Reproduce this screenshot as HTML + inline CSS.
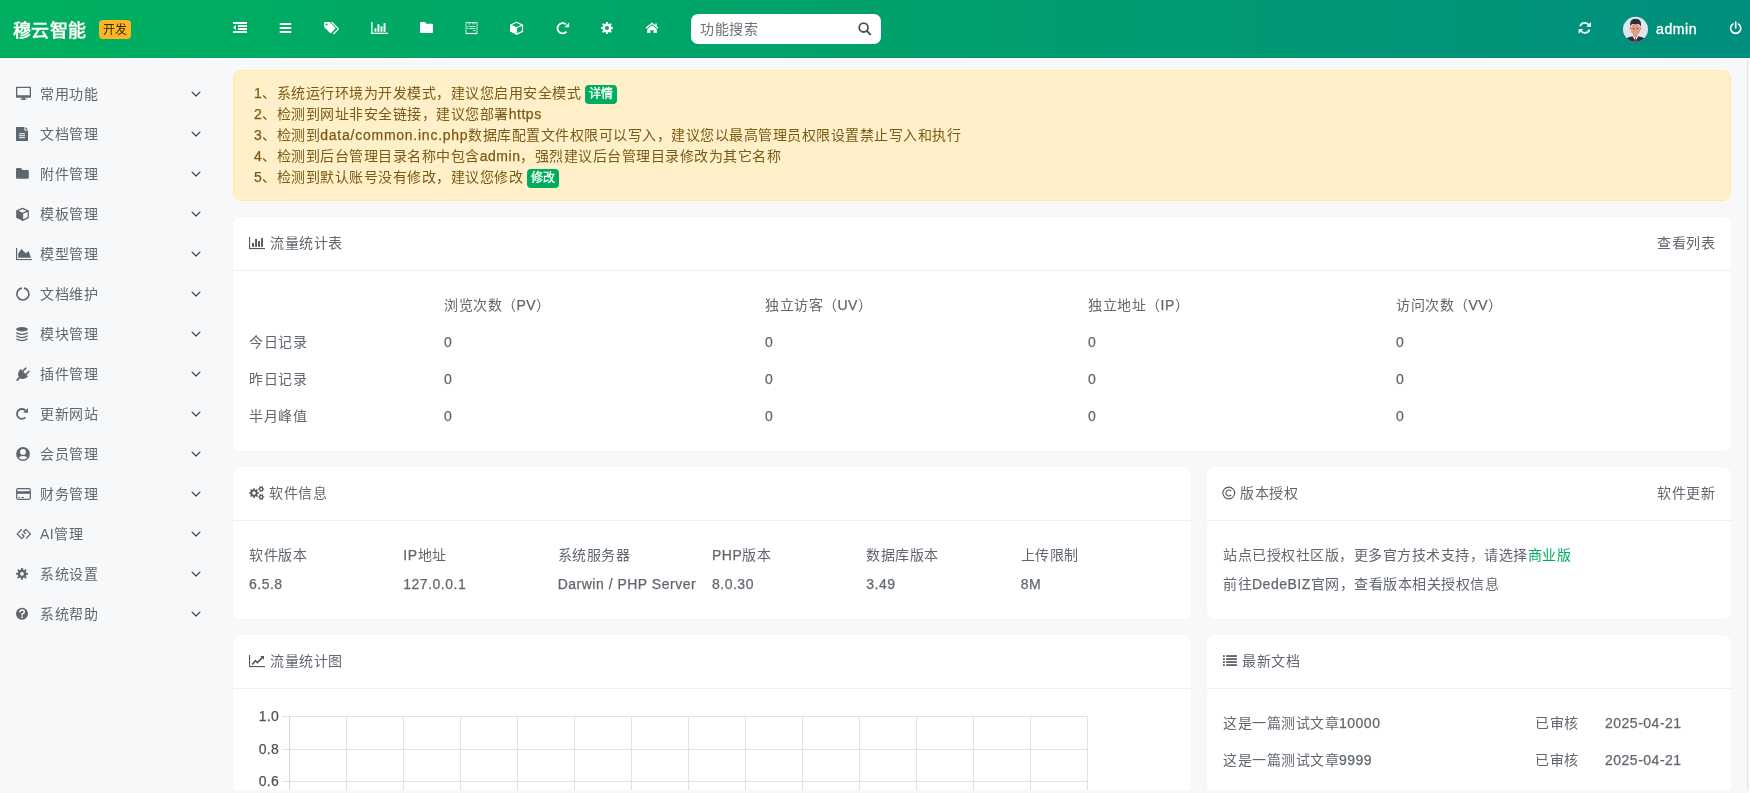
<!DOCTYPE html>
<html lang="zh-CN"><head><meta charset="utf-8"><style>
*{box-sizing:border-box;margin:0;padding:0}
html,body{width:1750px;height:793px;overflow:hidden}
body{letter-spacing:0.5px;text-spacing-trim:space-all;background:#f7f8fa;font-family:"Liberation Sans",sans-serif;font-size:14px;color:#5a6168;position:relative}
.abs{position:absolute}
.hdr{left:0;top:0;width:1750px;height:58px;background:linear-gradient(to right,#00af5f 0%,#00a667 35%,#008f7e 100%)}
.hdrb{left:0;top:57px;width:1750px;height:1px;background:rgba(0,0,0,.05)}
.hline{left:0;top:58px;width:1750px;height:1px;background:#fff}
.logo{left:13px;top:18.5px;font-size:18px;font-weight:bold;color:#fff;line-height:24px;letter-spacing:0.3px}
.badge-dev{left:99px;top:20px;width:32px;height:19px;background:#fbb625;border-radius:4px;color:#3a2a00;font-size:12px;line-height:21px;text-align:center;letter-spacing:0.2px}
.search{left:691px;top:14px;width:190px;height:30px;background:#fff;border-radius:7px}
.search .ph{position:absolute;left:9px;top:7px;line-height:16px;color:#6b7178}
.admin{left:1656px;top:18.5px;color:#fff;font-size:14px;line-height:20px;letter-spacing:0.6px;-webkit-text-stroke:0.35px #fff}
.si{position:absolute;left:0;width:225px;height:40px}
.si .ic{position:absolute;left:16px;top:13px;width:15px;height:14px}
.si .tx{position:absolute;left:40px;top:13px;line-height:16px;color:#60676e}
.si .chev{position:absolute;left:191px;top:18px}
.alert{left:233px;top:70px;width:1498px;height:131px;background:#fff0c9;border:1px solid #ffe8ab;border-radius:8px;color:#7b5a16}
.alert .ln{position:absolute;left:20px;line-height:16px;white-space:nowrap}
.bdg{display:inline-block;background:#00ad5f;color:#fff;font-size:12px;height:19px;line-height:19px;padding:0 3.5px 0 3.5px;border-radius:4px;vertical-align:top;margin-top:0;margin-left:-0.5px;letter-spacing:0.2px;-webkit-text-stroke:0.3px #fff}
.card{position:absolute;background:#fff;border-radius:7px;overflow:hidden;box-shadow:0 0 2px rgba(0,0,0,.035)}
.card .ch{position:absolute;left:0;top:0;width:100%;height:54px;border-bottom:1px solid #eeeff1}
.card .tt{position:absolute;left:16px;top:18px;line-height:16px;color:#60676e;white-space:nowrap}
.card .rt{position:absolute;right:16px;top:18px;line-height:16px;color:#60676e}
.t{position:absolute;line-height:16px;white-space:nowrap;color:#60676e}
.lat{}
.L{-webkit-text-stroke:0.25px currentColor}
</style></head><body>
<div id="root" style="position:absolute;left:0;top:0;width:1750px;height:793px;will-change:transform">
<div class="abs hdr"></div><div class="abs hdrb"></div><div class="abs hline"></div>
<div class="abs logo">穆云智能</div><div class="abs badge-dev">开发</div>
<div class="abs search"><span class="ph">功能搜索</span></div>
<div class="abs admin">admin</div>
<div class="si" style="top:73px"><div class="tx">常用功能</div><svg class="chev" width="10" height="6" viewBox="0 0 10 6"><path d="M1.2 1.3 L5 5 L8.8 1.3" fill="none" stroke="#41484f" stroke-width="1.25" stroke-linecap="round" stroke-linejoin="round"/></svg></div>
<div class="si" style="top:113px"><div class="tx">文档管理</div><svg class="chev" width="10" height="6" viewBox="0 0 10 6"><path d="M1.2 1.3 L5 5 L8.8 1.3" fill="none" stroke="#41484f" stroke-width="1.25" stroke-linecap="round" stroke-linejoin="round"/></svg></div>
<div class="si" style="top:153px"><div class="tx">附件管理</div><svg class="chev" width="10" height="6" viewBox="0 0 10 6"><path d="M1.2 1.3 L5 5 L8.8 1.3" fill="none" stroke="#41484f" stroke-width="1.25" stroke-linecap="round" stroke-linejoin="round"/></svg></div>
<div class="si" style="top:193px"><div class="tx">模板管理</div><svg class="chev" width="10" height="6" viewBox="0 0 10 6"><path d="M1.2 1.3 L5 5 L8.8 1.3" fill="none" stroke="#41484f" stroke-width="1.25" stroke-linecap="round" stroke-linejoin="round"/></svg></div>
<div class="si" style="top:233px"><div class="tx">模型管理</div><svg class="chev" width="10" height="6" viewBox="0 0 10 6"><path d="M1.2 1.3 L5 5 L8.8 1.3" fill="none" stroke="#41484f" stroke-width="1.25" stroke-linecap="round" stroke-linejoin="round"/></svg></div>
<div class="si" style="top:273px"><div class="tx">文档维护</div><svg class="chev" width="10" height="6" viewBox="0 0 10 6"><path d="M1.2 1.3 L5 5 L8.8 1.3" fill="none" stroke="#41484f" stroke-width="1.25" stroke-linecap="round" stroke-linejoin="round"/></svg></div>
<div class="si" style="top:313px"><div class="tx">模块管理</div><svg class="chev" width="10" height="6" viewBox="0 0 10 6"><path d="M1.2 1.3 L5 5 L8.8 1.3" fill="none" stroke="#41484f" stroke-width="1.25" stroke-linecap="round" stroke-linejoin="round"/></svg></div>
<div class="si" style="top:353px"><div class="tx">插件管理</div><svg class="chev" width="10" height="6" viewBox="0 0 10 6"><path d="M1.2 1.3 L5 5 L8.8 1.3" fill="none" stroke="#41484f" stroke-width="1.25" stroke-linecap="round" stroke-linejoin="round"/></svg></div>
<div class="si" style="top:393px"><div class="tx">更新网站</div><svg class="chev" width="10" height="6" viewBox="0 0 10 6"><path d="M1.2 1.3 L5 5 L8.8 1.3" fill="none" stroke="#41484f" stroke-width="1.25" stroke-linecap="round" stroke-linejoin="round"/></svg></div>
<div class="si" style="top:433px"><div class="tx">会员管理</div><svg class="chev" width="10" height="6" viewBox="0 0 10 6"><path d="M1.2 1.3 L5 5 L8.8 1.3" fill="none" stroke="#41484f" stroke-width="1.25" stroke-linecap="round" stroke-linejoin="round"/></svg></div>
<div class="si" style="top:473px"><div class="tx">财务管理</div><svg class="chev" width="10" height="6" viewBox="0 0 10 6"><path d="M1.2 1.3 L5 5 L8.8 1.3" fill="none" stroke="#41484f" stroke-width="1.25" stroke-linecap="round" stroke-linejoin="round"/></svg></div>
<div class="si" style="top:513px"><div class="tx">AI管理</div><svg class="chev" width="10" height="6" viewBox="0 0 10 6"><path d="M1.2 1.3 L5 5 L8.8 1.3" fill="none" stroke="#41484f" stroke-width="1.25" stroke-linecap="round" stroke-linejoin="round"/></svg></div>
<div class="si" style="top:553px"><div class="tx">系统设置</div><svg class="chev" width="10" height="6" viewBox="0 0 10 6"><path d="M1.2 1.3 L5 5 L8.8 1.3" fill="none" stroke="#41484f" stroke-width="1.25" stroke-linecap="round" stroke-linejoin="round"/></svg></div>
<div class="si" style="top:593px"><div class="tx">系统帮助</div><svg class="chev" width="10" height="6" viewBox="0 0 10 6"><path d="M1.2 1.3 L5 5 L8.8 1.3" fill="none" stroke="#41484f" stroke-width="1.25" stroke-linecap="round" stroke-linejoin="round"/></svg></div>
<div class="abs alert">
 <div class="ln" style="top:14px"><span class="L">1</span>、系统运行环境为开发模式，建议您启用安全模式 <span class="bdg">详情</span></div>
 <div class="ln" style="top:35px"><span class="L">2</span>、检测到网址非安全链接，建议您部署<span class="L">https</span></div>
 <div class="ln" style="top:56px"><span class="L">3</span>、检测到<span style="letter-spacing:0.75px"><span class="L">data/common.inc.php</span></span>数据库配置文件权限可以写入，建议您以最高管理员权限设置禁止写入和执行</div>
 <div class="ln" style="top:77px"><span class="L">4</span>、检测到后台管理目录名称中包含<span class="L">admin</span>，强烈建议后台管理目录修改为其它名称</div>
 <div class="ln" style="top:98px"><span class="L">5</span>、检测到默认账号没有修改，建议您修改 <span class="bdg">修改</span></div>
</div>
<div class="card" style="left:233px;top:217px;width:1498px;height:234px"><div class="ch"><div class="tt" style="left:37px">流量统计表</div><div class="rt">查看列表</div></div><div class="t" style="left:211px;top:80px">浏览次数（<span class="L">PV</span>）</div><div class="t" style="left:532px;top:80px">独立访客（<span class="L">UV</span>）</div><div class="t" style="left:855px;top:80px">独立地址（<span class="L">IP</span>）</div><div class="t" style="left:1163px;top:80px">访问次数（<span class="L">VV</span>）</div><div class="t" style="left:16px;top:117px">今日记录</div><div class="t" style="left:211px;top:117px"><span class="L">0</span></div><div class="t" style="left:532px;top:117px"><span class="L">0</span></div><div class="t" style="left:855px;top:117px"><span class="L">0</span></div><div class="t" style="left:1163px;top:117px"><span class="L">0</span></div><div class="t" style="left:16px;top:154px">昨日记录</div><div class="t" style="left:211px;top:154px"><span class="L">0</span></div><div class="t" style="left:532px;top:154px"><span class="L">0</span></div><div class="t" style="left:855px;top:154px"><span class="L">0</span></div><div class="t" style="left:1163px;top:154px"><span class="L">0</span></div><div class="t" style="left:16px;top:191px">半月峰值</div><div class="t" style="left:211px;top:191px"><span class="L">0</span></div><div class="t" style="left:532px;top:191px"><span class="L">0</span></div><div class="t" style="left:855px;top:191px"><span class="L">0</span></div><div class="t" style="left:1163px;top:191px"><span class="L">0</span></div></div>
<div class="card" style="left:233px;top:467px;width:958px;height:152px"><div class="ch"><div class="tt" style="left:36px">软件信息</div></div><div class="t" style="left:16.0px;top:80px">软件版本</div><div class="t lat" style="left:16.0px;top:109px"><span class="L">6.5.8</span></div><div class="t" style="left:170.3px;top:80px"><span class="L">IP</span>地址</div><div class="t lat" style="left:170.3px;top:109px"><span class="L">127.0.0.1</span></div><div class="t" style="left:324.7px;top:80px">系统服务器</div><div class="t lat" style="left:324.7px;top:109px"><span class="L">Darwin / PHP Server</span></div><div class="t" style="left:479.0px;top:80px"><span class="L">PHP</span>版本</div><div class="t lat" style="left:479.0px;top:109px"><span class="L">8.0.30</span></div><div class="t" style="left:633.3px;top:80px">数据库版本</div><div class="t lat" style="left:633.3px;top:109px"><span class="L">3.49</span></div><div class="t" style="left:787.7px;top:80px">上传限制</div><div class="t lat" style="left:787.7px;top:109px"><span class="L">8M</span></div></div>
<div class="card" style="left:1207px;top:467px;width:524px;height:152px">
<div class="ch"><div class="tt" style="left:33px">版本授权</div><div class="rt">软件更新</div></div>
<div class="t" style="left:16px;top:80px">站点已授权社区版，更多官方技术支持，请选择<span style="color:#00ad5f">商业版</span></div>
<div class="t" style="left:16px;top:109px">前往<span class="L">DedeBIZ</span>官网，查看版本相关授权信息</div>
</div>
<div class="card" style="left:233px;top:635px;width:958px;height:200px"><div class="ch"><div class="tt" style="left:37px">流量统计图</div></div><div class="t" style="left:0;width:46px;text-align:right;top:73px;color:#4d545b;letter-spacing:0.3px"><span class="L">1.0</span></div><div class="t" style="left:0;width:46px;text-align:right;top:106px;color:#4d545b;letter-spacing:0.3px"><span class="L">0.8</span></div><div class="t" style="left:0;width:46px;text-align:right;top:138px;color:#4d545b;letter-spacing:0.3px"><span class="L">0.6</span></div></div>
<div class="card" style="left:1207px;top:635px;width:524px;height:200px">
<div class="ch"><div class="tt" style="left:35px">最新文档</div></div>
<div class="t" style="left:16px;top:80px">这是一篇测试文章<span class="L">10000</span></div>
<div class="t" style="left:328px;top:80px">已审核</div>
<div class="t lat" style="left:398px;top:80px"><span class="L">2025-04-21</span></div>
<div class="t" style="left:16px;top:117px">这是一篇测试文章<span class="L">9999</span></div>
<div class="t" style="left:328px;top:117px">已审核</div>
<div class="t lat" style="left:398px;top:117px"><span class="L">2025-04-21</span></div>
</div>
<div class="abs" style="left:225px;top:790px;width:1525px;height:3px;background:#f7f8fa"></div>
<div class="abs" style="left:1747px;top:59px;width:1px;height:731px;background:#e3e3e3"></div>
<svg class="abs" style="left:0;top:0" width="1750" height="793" viewBox="0 0 1750 793"><g fill="#fff"><rect x="233" y="22" width="14" height="2"/><rect x="238" y="25" width="9" height="2"/><rect x="238" y="28" width="9" height="2"/><rect x="233" y="31" width="14" height="2"/><path d="M233,27.5 L236,25 L236,30 Z"/></g><g fill="#fff"><rect x="279.5" y="23" width="12" height="2" rx="1"/><rect x="279.5" y="27" width="12" height="2" rx="1"/><rect x="279.5" y="31" width="12" height="2" rx="1"/></g><path fill="#fff" fill-rule="evenodd" d="M324,23 Q324,22 325,22 L329.8,22 L335.2,27.6 Q335.8,28.2 335.2,28.8 L331.2,33 Q330.6,33.6 330,33 L324.6,27.4 Q324,26.8 324,26 Z M326.6,23.4 A1.1,1.1 0 1 0 326.6,25.6 A1.1,1.1 0 1 0 326.6,23.4 Z"/><path fill="none" stroke="#fff" stroke-width="1.2" d="M331.8,22.2 L338,28.4 Q338.5,28.9 338,29.4 L333.4,34"/><g fill="#fff"><rect x="371" y="22" width="1.6" height="12" fill-opacity="0.85"/><rect x="371" y="32.7" width="17" height="1.3"/><rect x="374.5" y="28.3" width="1.9" height="3.5"/><rect x="377.5" y="24.2" width="1.9" height="7.6"/><rect x="380.6" y="26.3" width="1.9" height="5.5"/><rect x="383.6" y="23.2" width="1.9" height="8.6"/></g><path fill="#fff" d="M420,23.2 Q420,22 421.2,22 L425,22 L426.4,23.8 L431.8,23.8 Q433,23.8 433,25 L433,31.8 Q433,33 431.8,33 L421.2,33 Q420,33 420,31.8 Z"/><g fill="none" stroke="#fff"><rect x="466" y="22.5" width="11" height="11" stroke-width="1" stroke-opacity="0.75"/><path d="M466,33.5 H477" stroke-width="1.2"/><circle cx="469.5" cy="23.3" r="0.9" stroke-width="0.7"/><circle cx="473.5" cy="23.3" r="0.9" stroke-width="0.7"/></g><g fill="#fff"><rect x="467.3" y="26" width="1" height="1"/><rect x="469.2" y="26.1" width="6.3" height="0.8"/><rect x="467.3" y="28" width="1" height="1"/><rect x="469.2" y="28.1" width="6.3" height="0.8"/><rect x="473.2" y="30.1" width="2.2" height="0.9"/></g><path fill="#fff" d="M510,25 L516.5,28 L516.5,34.8 L510,31.6 Z"/><path fill="none" stroke="#fff" stroke-width="1.2" stroke-linejoin="round" d="M510.6,25 L516.5,22.3 L522.5,25 L516.5,27.8 Z M516.5,27.8 L516.5,34.4 L522.5,31.4 L522.5,25"/><path fill="none" stroke="#fff" stroke-width="1.8" d="M565.88,24.39 A5.1,5.1 0 1 0 566.51,31.58"/><path fill="#fff" d="M569.2,22.5 L569.2,27.2 L564.5,27.2 Z"/><path fill-rule="evenodd" fill="#fff" d="M611.25,26.24 L611.52,27.13 L612.92,27.01 L612.92,28.99 L611.52,28.87 L611.25,29.76 L610.81,30.58 L611.88,31.49 L610.49,32.88 L609.58,31.81 L608.76,32.25 L607.87,32.52 L607.99,33.92 L606.01,33.92 L606.13,32.52 L605.24,32.25 L604.42,31.81 L603.51,32.88 L602.12,31.49 L603.19,30.58 L602.75,29.76 L602.48,28.87 L601.08,28.99 L601.08,27.01 L602.48,27.13 L602.75,26.24 L603.19,25.42 L602.12,24.51 L603.51,23.12 L604.42,24.19 L605.24,23.75 L606.13,23.48 L606.01,22.08 L607.99,22.08 L607.87,23.48 L608.76,23.75 L609.58,24.19 L610.49,23.12 L611.88,24.51 L610.81,25.42 Z M609.00,28.00 A2.0,2.0 0 1 0 605.00,28.00 A2.0,2.0 0 1 0 609.00,28.00 Z"/><path fill="#fff" d="M652,25.2 L656.8,29.2 L656.8,33 L653.6,33 L653.6,30.2 L650.4,30.2 L650.4,33 L647.2,33 L647.2,29.2 Z"/><path fill="none" stroke="#fff" stroke-width="1.2" stroke-linejoin="miter" d="M645.9,28.3 L652,23.2 L658.1,28.3"/><rect fill="#fff" x="655.3" y="23.4" width="1.4" height="2.8"/><g fill="none" stroke="#4a5259" stroke-width="1.8" stroke-linecap="round"><circle cx="863.6" cy="27.6" r="4.4"/><path d="M866.9,31 L870.3,34.4" stroke-width="2"/></g><g fill="none" stroke="#fff" stroke-width="1.7"><path d="M1580.10,26.19 A5,5 0 0 1 1589.13,25.40"/><path d="M1589.50,29.61 A5,5 0 0 1 1580.47,30.40"/></g><g fill="#fff"><path d="M1591,22 L1591,26.8 L1586.4,26.8 Z"/><path d="M1578.6,33.8 L1578.6,29 L1583.2,29 Z"/></g><g fill="none" stroke="#fff" stroke-width="1.6" stroke-linecap="round"><path d="M1738.40,23.97 A5.1,5.1 0 1 1 1733.00,23.97"/><path d="M1735.7,22 L1735.7,28"/></g><defs><clipPath id="avc"><circle cx="1635.5" cy="29.3" r="12.5"/></clipPath></defs><g clip-path="url(#avc)"><rect x="1622" y="16" width="27" height="27" fill="#dfe5ec"/><path d="M1623.5,43 Q1625,37.6 1631.5,36.6 L1639.5,36.6 Q1646,37.6 1647.5,43 Z" fill="#283041"/><path d="M1632.6,36.2 L1638.4,36.2 L1635.5,41 Z" fill="#f4f4f4"/><path d="M1635,37.6 L1636,37.6 L1636.6,43 L1634.4,43 Z" fill="#d42a2a"/><rect x="1633.6" y="33" width="3.8" height="4" fill="#d9957a"/><ellipse cx="1630.6" cy="28.6" rx="1" ry="1.4" fill="#d88f72"/><ellipse cx="1640.4" cy="28.6" rx="1" ry="1.4" fill="#d88f72"/><ellipse cx="1635.5" cy="29.4" rx="4.7" ry="5.5" fill="#e39c80"/><rect x="1633.3" y="28" width="0.9" height="1.3" fill="#3a2a25"/><rect x="1636.9" y="28" width="0.9" height="1.3" fill="#3a2a25"/><path d="M1630.2,26.6 Q1629.2,19 1635.6,18.8 Q1642,19 1641,26.6 L1640.2,25.4 Q1639.6,23.8 1635.5,24.2 Q1631.4,23.8 1630.8,25.4 Z" fill="#2e2e33"/></g><path fill="#5d676f" fill-rule="evenodd" d="M16,87.5 Q16,86.8 16.8,86.8 L30.2,86.8 Q31,86.8 31,87.5 L31,97 Q31,97.8 30.2,97.8 L16.8,97.8 Q16,97.8 16,97 Z M17.3,88.1 L29.7,88.1 L29.7,95.2 L17.3,95.2 Z"/><rect fill="#5d676f" x="21.8" y="97.6" width="3.4" height="1.6"/><rect fill="#5d676f" x="20.5" y="98.8" width="6" height="1"/><path fill="#5d676f" d="M16,127 L24.3,127 L24.3,130.6 L28,130.6 L28,141 L16,141 Z"/><path fill="#5d676f" d="M25.3,127 L28,129.6 L25.3,129.6 Z"/><g fill="#f7f8fa"><rect x="19" y="133.2" width="6" height="1"/><rect x="19" y="135.2" width="6" height="1"/><rect x="19" y="137.2" width="6" height="1"/></g><path fill="#5d676f" d="M16,169.2 Q16,168 17.2,168 L21,168 L22.4,170 L27.6,170 Q28.8,170 28.8,171.2 L28.8,177.6 Q28.8,178.8 27.6,178.8 L17.2,178.8 Q16,178.8 16,177.6 Z"/><path fill="#5d676f" d="M16.2,210.6 L22.5,213.4 L22.5,220.8 L16.2,217.8 Z"/><path fill="none" stroke="#5d676f" stroke-width="1.3" stroke-linejoin="round" d="M16.8,210.8 L22.5,208.4 L28.2,210.8 L22.5,213.3 Z M22.5,213.3 L22.5,220.3 L28.2,217.6 L28.2,210.8"/><g fill="#5d676f"><rect x="16" y="248" width="1.2" height="12"/><rect x="16" y="259" width="16" height="1.1"/><path d="M18.2,253.4 L21.4,249 L25.8,253.2 L28.6,251 L31,257.8 L18.2,257.8 Z"/></g><path fill="none" stroke="#5d676f" stroke-width="1.6" d="M23.94,288.09 A6,6 0 1 1 21.86,288.09"/><g fill="#5d676f"><ellipse cx="22" cy="329.2" rx="6" ry="2.2"/></g><g fill="none" stroke="#5d676f" stroke-width="1.3"><path d="M16.3,332.6 Q22,336.2 27.7,332.6"/><path d="M16.3,335.8 Q22,339.4 27.7,335.8"/><path d="M16.3,338.8 Q22,342.4 27.7,338.8"/></g><g transform="translate(24.1,373) rotate(-45)" fill="#5d676f"><path d="M0.3,-5.2 L0.3,5.2 C-3,5.2 -6.6,3.6 -6.6,0 C-6.6,-3.6 -3,-5.2 0.3,-5.2 Z"/><rect x="-10.6" y="-0.95" width="5" height="1.9" rx="0.6"/><rect x="0" y="-3.05" width="5.4" height="1.6" rx="0.7"/><rect x="0" y="1.45" width="5.4" height="1.6" rx="0.7"/></g><path fill="none" stroke="#5d676f" stroke-width="1.8" d="M25.65,410.75 A4.9,4.9 0 1 0 25.36,417.36"/><path fill="#5d676f" d="M28,408 L28,412.8 L23.2,412.8 Z"/><defs><clipPath id="uc"><circle cx="23" cy="454" r="5.6"/></clipPath></defs><circle cx="23" cy="454" r="6.9" fill="#5d676f"/><g clip-path="url(#uc)" fill="#f7f8fa"><circle cx="23" cy="451.9" r="2.9"/><ellipse cx="23" cy="459.8" rx="5.8" ry="3.7"/></g><rect x="16.7" y="488.6" width="13.6" height="10.7" rx="1.2" fill="none" stroke="#5d676f" stroke-width="1.2"/><rect x="16.3" y="491.2" width="14.4" height="2.6" fill="#5d676f"/><rect x="18.2" y="497" width="1.8" height="1" rx="0.5" fill="#5d676f"/><rect x="21.2" y="497" width="2.8" height="1" rx="0.5" fill="#5d676f"/><g fill="none" stroke="#5d676f" stroke-width="1.3" stroke-linejoin="miter"><path d="M21.6,529.3 L17.3,533.9 L21.6,538.6 L24,536.2 L21.8,533.8"/><path d="M26,538.6 L30.4,533.9 L26,529.3 L23.6,531.6 L25.8,534"/></g><path fill-rule="evenodd" fill="#5d676f" d="M26.07,572.12 L26.32,572.97 L27.92,572.81 L27.92,574.79 L26.32,574.63 L26.06,575.48 L25.64,576.27 L26.88,577.29 L25.49,578.68 L24.47,577.44 L23.68,577.87 L22.83,578.12 L22.99,579.72 L21.01,579.72 L21.17,578.12 L20.32,577.86 L19.53,577.44 L18.51,578.68 L17.12,577.29 L18.36,576.27 L17.93,575.48 L17.68,574.63 L16.08,574.79 L16.08,572.81 L17.68,572.97 L17.94,572.12 L18.36,571.33 L17.12,570.31 L18.51,568.92 L19.53,570.16 L20.32,569.73 L21.17,569.48 L21.01,567.88 L22.99,567.88 L22.83,569.48 L23.68,569.74 L24.47,570.16 L25.49,568.92 L26.88,570.31 L25.64,571.33 Z M23.90,573.80 A1.9,1.9 0 1 0 20.10,573.80 A1.9,1.9 0 1 0 23.90,573.80 Z"/><circle cx="22" cy="613.8" r="6" fill="#5d676f"/><path fill="none" stroke="#f7f8fa" stroke-width="1.5" d="M19.8,612.4 Q19.9,610 22.2,610 Q24.4,610.1 24.3,611.9 Q24.2,613 22.6,613.8 L22,614.4 L22,615.4"/><rect x="21.2" y="616.4" width="1.7" height="1.6" fill="#f7f8fa"/><g fill="#4f5961"><rect x="249" y="237" width="1.1" height="12"/><rect x="249" y="248" width="16" height="1.1"/><rect x="252.1" y="243" width="1.9" height="3.9"/><rect x="255.1" y="238.9" width="1.9" height="8"/><rect x="258.1" y="241" width="1.9" height="5.9"/><rect x="261.1" y="238.1" width="1.9" height="8.8"/></g><path fill-rule="evenodd" fill="#4f5961" d="M257.33,491.72 L257.53,492.37 L258.82,492.24 L258.82,493.96 L257.53,493.83 L257.33,494.48 L257.01,495.08 L258.02,495.90 L256.80,497.12 L255.98,496.11 L255.38,496.43 L254.73,496.63 L254.86,497.92 L253.14,497.92 L253.27,496.63 L252.62,496.43 L252.02,496.11 L251.20,497.12 L249.98,495.90 L250.99,495.08 L250.67,494.48 L250.47,493.83 L249.18,493.96 L249.18,492.24 L250.47,492.37 L250.67,491.72 L250.99,491.12 L249.98,490.30 L251.20,489.08 L252.02,490.09 L252.62,489.77 L253.27,489.57 L253.14,488.28 L254.86,488.28 L254.73,489.57 L255.38,489.77 L255.98,490.09 L256.80,489.08 L258.02,490.30 L257.01,491.12 Z M255.80,493.10 A1.8,1.8 0 1 0 252.20,493.10 A1.8,1.8 0 1 0 255.80,493.10 Z"/><path fill-rule="evenodd" fill="#4f5961" d="M263.11,487.90 L263.32,488.41 L264.12,488.30 L264.12,489.70 L263.32,489.59 L263.11,490.10 L262.77,490.54 L263.27,491.18 L262.05,491.88 L261.75,491.13 L261.20,491.20 L260.65,491.13 L260.35,491.88 L259.13,491.18 L259.63,490.54 L259.29,490.10 L259.08,489.59 L258.28,489.70 L258.28,488.30 L259.08,488.41 L259.29,487.90 L259.63,487.46 L259.13,486.82 L260.35,486.12 L260.65,486.87 L261.20,486.80 L261.75,486.87 L262.05,486.12 L263.27,486.82 L262.77,487.46 Z M262.20,489.00 A1.0,1.0 0 1 0 260.20,489.00 A1.0,1.0 0 1 0 262.20,489.00 Z"/><path fill-rule="evenodd" fill="#4f5961" d="M263.11,495.90 L263.32,496.41 L264.12,496.30 L264.12,497.70 L263.32,497.59 L263.11,498.10 L262.77,498.54 L263.27,499.18 L262.05,499.88 L261.75,499.13 L261.20,499.20 L260.65,499.13 L260.35,499.88 L259.13,499.18 L259.63,498.54 L259.29,498.10 L259.08,497.59 L258.28,497.70 L258.28,496.30 L259.08,496.41 L259.29,495.90 L259.63,495.46 L259.13,494.82 L260.35,494.12 L260.65,494.87 L261.20,494.80 L261.75,494.87 L262.05,494.12 L263.27,494.82 L262.77,495.46 Z M262.20,497.00 A1.0,1.0 0 1 0 260.20,497.00 A1.0,1.0 0 1 0 262.20,497.00 Z"/><circle cx="1228.8" cy="493" r="5.9" fill="none" stroke="#4f5961" stroke-width="1.1"/><path fill="none" stroke="#4f5961" stroke-width="1.1" d="M1231.20,491.07 A3,3 0 1 0 1231.20,494.93"/><g fill="#4f5961"><rect x="249" y="655" width="1.1" height="12"/><rect x="249" y="666" width="16" height="1.1"/></g><path fill="none" stroke="#4f5961" stroke-width="1.6" stroke-linejoin="miter" d="M252.2,664.4 L255.4,660.6 L257.4,662.6 L262.2,657.6"/><path fill="#4f5961" d="M260.2,656 L264,656 L264,659.8 Z"/><g fill="#4f5961"><rect x="1223" y="655.2" width="1.8" height="1.7"/><rect x="1226.2" y="655.2" width="10.7" height="1.7"/><rect x="1223" y="658.2" width="1.8" height="1.7"/><rect x="1226.2" y="658.2" width="10.7" height="1.7"/><rect x="1223" y="661.2" width="1.8" height="1.7"/><rect x="1226.2" y="661.2" width="10.7" height="1.7"/><rect x="1223" y="664.2" width="1.8" height="1.7"/><rect x="1226.2" y="664.2" width="10.7" height="1.7"/></g><path d="M282,716.5 L1087.5,716.5" stroke="#e2e2e2" stroke-width="1"/><path d="M282,749.5 L1087.5,749.5" stroke="#e2e2e2" stroke-width="1"/><path d="M282,781.5 L1087.5,781.5" stroke="#e2e2e2" stroke-width="1"/><path d="M289.5,716 L289.5,790" stroke="#d6d6d6" stroke-width="1"/><path d="M346.5,716 L346.5,790" stroke="#e2e2e2" stroke-width="1"/><path d="M403.5,716 L403.5,790" stroke="#e2e2e2" stroke-width="1"/><path d="M460.5,716 L460.5,790" stroke="#e2e2e2" stroke-width="1"/><path d="M517.5,716 L517.5,790" stroke="#e2e2e2" stroke-width="1"/><path d="M574.5,716 L574.5,790" stroke="#e2e2e2" stroke-width="1"/><path d="M631.5,716 L631.5,790" stroke="#e2e2e2" stroke-width="1"/><path d="M688.5,716 L688.5,790" stroke="#e2e2e2" stroke-width="1"/><path d="M745.5,716 L745.5,790" stroke="#e2e2e2" stroke-width="1"/><path d="M802.5,716 L802.5,790" stroke="#e2e2e2" stroke-width="1"/><path d="M859.5,716 L859.5,790" stroke="#e2e2e2" stroke-width="1"/><path d="M916.5,716 L916.5,790" stroke="#e2e2e2" stroke-width="1"/><path d="M973.5,716 L973.5,790" stroke="#e2e2e2" stroke-width="1"/><path d="M1030.5,716 L1030.5,790" stroke="#e2e2e2" stroke-width="1"/><path d="M1087.5,716 L1087.5,790" stroke="#e2e2e2" stroke-width="1"/></svg>
<div class="abs" style="left:225px;top:790px;width:1525px;height:3px;background:#f7f8fa"></div>
</div></body></html>
